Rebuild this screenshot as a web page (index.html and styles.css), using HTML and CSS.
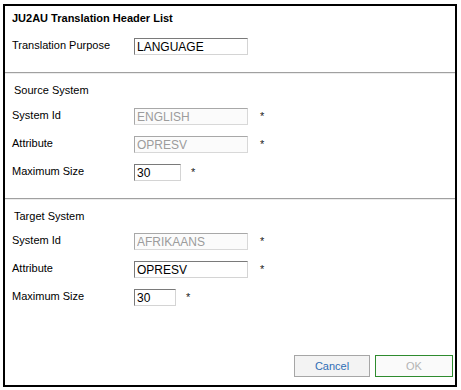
FILE: index.html
```html
<!DOCTYPE html>
<html lang="en">
<head>
    <meta charset="UTF-8">
    <title>JU2AU Translation Header List</title>
    <link rel="stylesheet" href="styles.css">
</head>
<body>
<div class="dialog">
    <div class="dialog-title">JU2AU Translation Header List</div>

    <div class="form-row first-row">
        <label>Translation Purpose</label>
        <input class="field wide" type="text" value="LANGUAGE">
    </div>

    <div class="separator"></div>

    <div class="section-title">Source System</div>
    <div class="rows">
        <div class="form-row">
            <label>System Id</label>
            <input class="field wide" type="text" value="ENGLISH" disabled>
            <span class="required">*</span>
        </div>
        <div class="form-row">
            <label>Attribute</label>
            <input class="field wide" type="text" value="OPRESV" disabled>
            <span class="required">*</span>
        </div>
        <div class="form-row">
            <label>Maximum Size</label>
            <input class="field size" type="text" value="30">
            <span class="required">*</span>
        </div>
    </div>

    <div class="separator second"></div>

    <div class="section-title">Target System</div>
    <div class="rows target">
        <div class="form-row">
            <label>System Id</label>
            <input class="field wide" type="text" value="AFRIKAANS" disabled>
            <span class="required">*</span>
        </div>
        <div class="form-row">
            <label>Attribute</label>
            <input class="field wide" type="text" value="OPRESV">
            <span class="required">*</span>
        </div>
        <div class="form-row">
            <label>Maximum Size</label>
            <input class="field size small" type="text" value="30">
            <span class="required">*</span>
        </div>
    </div>

    <div class="dialog-buttons">
        <button class="btn btn-cancel">Cancel</button>
        <button class="btn btn-ok" disabled>OK</button>
    </div>
</div>
</body>
</html>
```

FILE: styles.css
```css
body {
    margin: 0;
    background: #ffffff;
    font-family: 'Liberation Sans', Arial, sans-serif;
    font-size: 11px;
    color: #000;
}

.dialog {
    box-sizing: border-box;
    width: 454px;
    height: 383px;
    margin: 4px 0 0 3px;
    border: 2px solid #000;
    display: flex;
    flex-direction: column;
}

.dialog-title {
    height: 24px;
    line-height: 24px;
    padding-left: 7px;
    font-weight: bold;
    font-size: 11px;
}

.form-row {
    display: flex;
    align-items: flex-start;
    height: 17px;
    padding-left: 7px;
}

.form-row label {
    width: 122px;
    line-height: 15px;
    flex-shrink: 0;
}

.first-row {
    margin-top: 8px;
}

.first-row label {
    line-height: 14px;
}

.field {
    box-sizing: border-box;
    height: 17px;
    margin: 0;
    padding: 1px 2px 0;
    border: 1px solid #d4d4d4;
    border-top-color: #7a7a7a;
    border-left-color: #7a7a7a;
    background: #fff;
    font-family: 'Liberation Sans', Arial, sans-serif;
    font-size: 12px;
    color: #000;
    outline: none;
}

.field:disabled {
    border-color: #d8d8d8;
    border-top-color: #a8a8a8;
    border-left-color: #a8a8a8;
    background: #fbfbfb;
    color: #9c9c9c;
}

.wide {
    width: 114px;
}

.size {
    width: 47px;
}

.size.small {
    width: 42px;
}

.required {
    margin: 3px 0 0 12px;
    font-size: 11px;
    line-height: 11px;
    color: #222;
}

.size + .required {
    margin-left: 10px;
}

.separator {
    margin-top: 17px;
    height: 1px;
    background: #a0a0a0;
    border-bottom: 1px solid #ececec;
}

.separator.second {
    margin-top: 17px;
}

.section-title {
    margin-top: 8px;
    height: 17px;
    line-height: 17px;
    padding-left: 9px;
}

.rows {
    margin-top: 9px;
    display: flex;
    flex-direction: column;
    gap: 11px;
}

.rows.target {
    margin-top: 8px;
}

.dialog-buttons {
    margin-top: auto;
    margin-bottom: 8px;
    display: flex;
    justify-content: flex-end;
    gap: 5px;
    padding-right: 2px;
}

.btn {
    box-sizing: border-box;
    width: 76px;
    height: 22px;
    padding: 0;
    font-family: 'Liberation Sans', Arial, sans-serif;
    font-size: 11px;
    cursor: pointer;
}

.btn-cancel {
    border: 1px solid #a6a6a6;
    background: #f3f3f3;
    color: #2f6db5;
}

.btn-ok {
    width: 78px;
    border: 1px solid #2e8b2e;
    background: #fafafa;
    color: #b4b4b4;
}
```
